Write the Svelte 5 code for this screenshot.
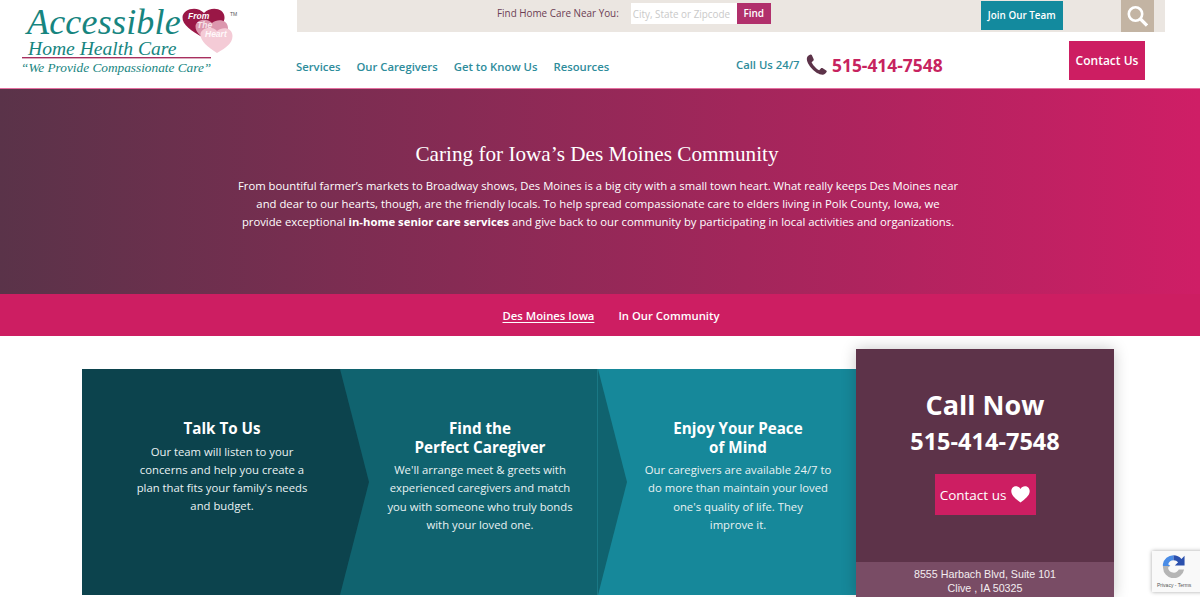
<script>
  const steps = [
    { cls: 's1', title: ['Talk To Us'], text: ['Our team will listen to your', 'concerns and help you create a', "plan that fits your family's needs", 'and budget.'] },
    { cls: 's2', title: ['Find the', 'Perfect Caregiver'], text: ["We'll arrange meet & greets with", 'experienced caregivers and match', 'you with someone who truly bonds', 'with your loved one.'] },
    { cls: 's3', title: ['Enjoy Your Peace', 'of Mind'], text: ['Our caregivers are available 24/7 to', 'do more than maintain your loved', "one's quality of life. They", 'improve it.'] }
  ];
</script>

<div class="page">
  <header class="header">
    <div class="logo">
      <svg width="297" height="88" viewBox="0 0 297 88">
        <text class="l1" x="27" y="34">Accessible</text>
        <text class="l2" x="28" y="55">Home Health Care</text>
        <rect x="22" y="57" width="189" height="1.4" fill="#a8305f" />
        <text class="l3" x="21" y="72">“We Provide Compassionate Care”</text>
        <path d="M202 37 C192 31 182 25 182.5 17 C183 9 197 5 204 13 C211 6 224 8 224.500 17 C225 26 212 32 202 37Z" fill="#9a1746" />
        <path d="M212 44 C203 38 195 33 195.500 26 C196 20 206 17 212 23 C218 18 228 20 228 28 C228 35 220 40 212 44Z" fill="#dc97ae" />
        <path d="M217 53 C208 47 200 41 200.500 34 C201 28 212 25 217 31 C223 26 232.500 28 232.500 36 C232.500 43 226 48 217 53Z" fill="#f4cbd6" />
        <text class="h" x="188" y="19">From</text>
        <text class="h h1" x="197" y="28">The</text>
        <text class="h h2" x="205" y="36.500">Heart</text>
        <text class="tm" x="230" y="16">TM</text>
      </svg>
    </div>
    <div class="right">
      <div class="topbar">
        <span class="find-label">Find Home Care Near You:</span>
        <span class="input">City, State or Zipcode</span>
        <span class="find-btn">Find</span>
        <span class="join">Join Our Team</span>
        <span class="search">
          <svg width="22" height="22" viewBox="0 0 22 22" fill="none" stroke="#fff" stroke-width="2.6">
            <circle cx="9.5" cy="9" r="6.7" />
            <path d="M14.5 14 L21 20.5" stroke-width="3.2" />
          </svg>
        </span>
      </div>
      <div class="mainrow">
        <nav class="nav">
          <span>Services</span><span>Our Caregivers</span><span>Get to Know Us</span><span>Resources</span>
        </nav>
        <span class="callus">Call Us 24/7</span>
        <svg class="phone" width="21" height="21" viewBox="0 0 21 21">
          <path d="M4.6 .6 C3 .9 1.2 2.4 .9 4 C.4 7.5 3 11.5 6 14.8 C9 18 13 20.8 16.6 20.7 C18.4 20.6 20 19.4 20.7 17.8 C20.9 17.2 20.7 16.7 20.2 16.4 L16.4 14.1 C15.8 13.8 15.2 13.9 14.8 14.4 L13.2 16.2 C10.6 15 6.7 11 5.6 8.2 L7.3 6.8 C7.8 6.4 7.9 5.8 7.7 5.2 L5.8 1.1 C5.6 .7 5.1 .5 4.6 .6Z" fill="#5d3349" />
        </svg>
        <span class="number">515-414-7548</span>
        <span class="contact">Contact Us</span>
      </div>
    </div>
  </header>

  <section class="hero">
    <h1>Caring for Iowa’s Des Moines Community</h1>
    <p>From bountiful farmer’s markets to Broadway shows, Des Moines is a big city with a small town heart. What really keeps Des Moines near<br />and dear to our hearts, though, are the friendly locals. To help spread compassionate care to elders living in Polk County, Iowa, we<br />provide exceptional <b>in-home senior care services</b> and give back to our community by participating in local activities and organizations.</p>
  </section>

  <div class="subnav">
    <span class="active">Des Moines Iowa</span>
    <span>In Our Community</span>
  </div>

  <section class="lower">
    <div class="steps">
      {#each steps as s}
        <article class="step {s.cls}">
          <h2>{#each s.title as t}<span>{t}</span>{/each}</h2>
          {#each s.text as t}<p>{t}</p>{/each}
        </article>
      {/each}
    </div>
    <aside class="card">
      <div class="card-main">
        <div class="callnow">Call Now</div>
        <div class="bignum">515-414-7548</div>
        <span class="contact2">Contact us
          <svg width="19" height="17" viewBox="0 0 19 17"><path d="M9.5 16.6 C5 13 .3 9.6 .3 5.2 C.3 2.3 2.5 .3 5 .3 C6.9 .3 8.6 1.3 9.5 3 C10.4 1.3 12.1 .3 14 .3 C16.5 .3 18.7 2.3 18.7 5.2 C18.7 9.6 14 13 9.5 16.6Z" fill="#fff" /></svg>
        </span>
      </div>
      <div class="address">8555 Harbach Blvd, Suite 101<br />Clive , IA 50325</div>
    </aside>
  </section>

  <div class="recaptcha">
    <svg width="23" height="24" viewBox="0 0 26 26">
      <path d="M1 11 A12 12 0 0 1 13 .8 V6.5 A6.5 6.5 0 0 0 7 11 L9.500 13 H1Z" fill="#4a8ce6" />
      <path d="M13 .8 A12 12 0 0 1 22 5 L25.500 1.500 V12.500 H14.500 L18.200 8.800 A6.500 6.500 0 0 0 13 6.500Z" fill="#2b50ad" />
      <path d="M1 13 H9 L6.800 15 A6.500 6.500 0 0 0 19 17 H25 A12 12 0 0 1 1.200 15Z" fill="#b5b5b5" />
    </svg>
    <span>Privacy - Terms</span>
  </div>
</div>

<style>
  :global(body) { margin: 0; overflow: hidden; background: #fff; }
  .page { position: relative; width: 1200px; height: 597px; overflow: hidden; font-family: "Open Sans", sans-serif; color: #fff; }

  .header { display: flex; height: 88px; border-bottom: 1px solid #e46fa0; box-sizing: content-box; }
  .logo { width: 297px; flex: none; }
  .logo svg { display: block; }
  .l1 { font: italic 36px "Liberation Serif", serif; fill: #17857f; letter-spacing: .2px; }
  .l2 { font: italic 19.600px "Liberation Serif", serif; fill: #17857f; }
  .l3 { font: italic 13.300px "Liberation Serif", serif; fill: #17857f; }
  .h { font: italic bold 8.500px "Liberation Sans", sans-serif; fill: #fff; }
  .h1 { fill: #f6e4ea; }
  .h2 { fill: #fff8fa; }
  .tm { font: 5px "Liberation Sans", sans-serif; fill: #555; }

  .right { width: 868px; display: flex; flex-direction: column; }
  .topbar { height: 32px; background: #ebe6e1; display: flex; align-items: flex-start; padding-left: 200px; box-sizing: border-box; }
  .find-label { color: #6b3d54; margin: 6px 12px 0 0; line-height: 15px; white-space: nowrap; font-size: 9.9px; }
  .input { width: 106px; height: 21px; margin-top: 3px; background: #fff; color: #c9c9c9; line-height: 22px; padding-left: 2px; box-sizing: border-box; white-space: nowrap; font-size: 9.9px; }
  .find-btn { width: 34px; height: 21px; margin-top: 3px; background: #b1306c; color: #fff; text-align: center; line-height: 21px; font-weight: 600; font-size: 10px; }
  .join { margin: 1px 0 0 210px; width: 82px; height: 29px; background: #138a9e; color: #fff; font-weight: 600; text-align: center; line-height: 29px; font-size: 9.9px; white-space: nowrap; }
  .search { margin-left: 58px; width: 33px; height: 32px; background: #c3b4a3; display: flex; align-items: center; justify-content: center; }

  .mainrow { position: relative; flex: 1; display: flex; align-items: flex-start; }
  .nav { display: flex; gap: 16px; margin: 26px 0 0 -1px; font-size: 11.3px; font-weight: 600; line-height: 17px; color: #2e8c9b; white-space: nowrap; width: 440px; }
  .callus { margin-top: 24px; font-size: 11.3px; font-weight: 600; line-height: 17px; color: #2e8c9b; white-space: nowrap; width: 70px; }
  .phone { margin-top: 22px; flex: none; }
  .number { margin: 21px 0 0 5px; font-size: 17.4px; font-weight: 700; line-height: 25px; color: #c7235f; width: 237px; white-space: nowrap; }
  .contact { margin-top: 9px; width: 76px; height: 39px; background: #cd1e62; color: #fff; font-size: 12px; font-weight: 600; text-align: center; line-height: 39px; white-space: nowrap; }

  .hero { height: 205px; background: linear-gradient(90deg, #5a3349 0%, #cf1e66 100%); text-align: center; box-sizing: border-box; padding-top: 52px; }
  .hero h1 { margin: 0; font: 400 21.2px/27px "Liberation Serif", serif; color: #fff; transform: translateX(-3px); }
  .hero p { margin: 9px 0 0; font-size: 11.3px; line-height: 18.2px; color: #fff; white-space: nowrap; transform: translateX(-2px); }
  .hero b { font-weight: 700; }

  .subnav { height: 42px; background: #cd1e62; display: flex; align-items: center; justify-content: center; gap: 24px; font-size: 11.3px; font-weight: 600; padding-left: 22px; box-sizing: border-box; }
  .active { text-decoration: underline; text-underline-offset: 2px; }

  .lower { display: flex; align-items: flex-start; padding: 13px 0 0 82px; }
  .steps { display: flex; margin-top: 20px; }
  .step { position: relative; width: 258px; height: 226px; box-sizing: border-box; padding: 50px 0 0 22px; text-align: center; }
  .step::after { content: ""; position: absolute; left: 100%; top: 0; width: 29px; height: 100%; clip-path: polygon(0 0, 100% 50%, 0 100%); z-index: 1; }
  .s1 { background: #0c434d; }
  .s1::after { background: #0c434d; }
  .s2 { background: #10636f; box-shadow: inset -1px 0 0 #1a7885; }
  .s2::after { background: #10636f; }
  .s3 { background: #16889a; }
  .s3::after { display: none; }
  .step h2 { margin: 0 0 5px; font-size: 15.2px; line-height: 18.5px; font-weight: 700; color: #fff; }
  .step h2 span { display: block; }
  .step p { margin: 0; font-size: 11.3px; line-height: 18.3px; color: #e9f2f3; white-space: nowrap; }

  .card { position: relative; z-index: 2; width: 258px; height: 248px; background: #5d3349; box-shadow: 0 0 14px rgba(0,0,0,.22); text-align: center; flex: none; }
  .card-main { height: 213px; box-sizing: border-box; padding-top: 38px; }
  .callnow { font-size: 27px; font-weight: 700; line-height: 36px; }
  .bignum { font-size: 23.5px; font-weight: 700; line-height: 32px; margin-top: 2px; }
  .contact2 { display: inline-flex; align-items: center; justify-content: center; gap: 5px; margin-top: 17px; width: 101px; height: 41px; background: #cd1e62; font-size: 13.5px; font-weight: 500; }
  .address { height: 35px; background: #794c65; font: 10.7px/13.5px "Liberation Sans", sans-serif; padding-top: 6px; box-sizing: border-box; color: #f3edf0; }

  .recaptcha { position: absolute; left: 1152px; top: 551px; width: 60px; height: 41px; background: #f9f9f9; box-shadow: 0 0 4px rgba(0,0,0,.35); box-sizing: border-box; padding: 3px 0 0 10px; color: #555; }
  .recaptcha svg { display: block; }
  .recaptcha span { position: absolute; left: 5px; top: 31px; font: 5px/6px "Liberation Sans", sans-serif; white-space: nowrap; }
</style>
